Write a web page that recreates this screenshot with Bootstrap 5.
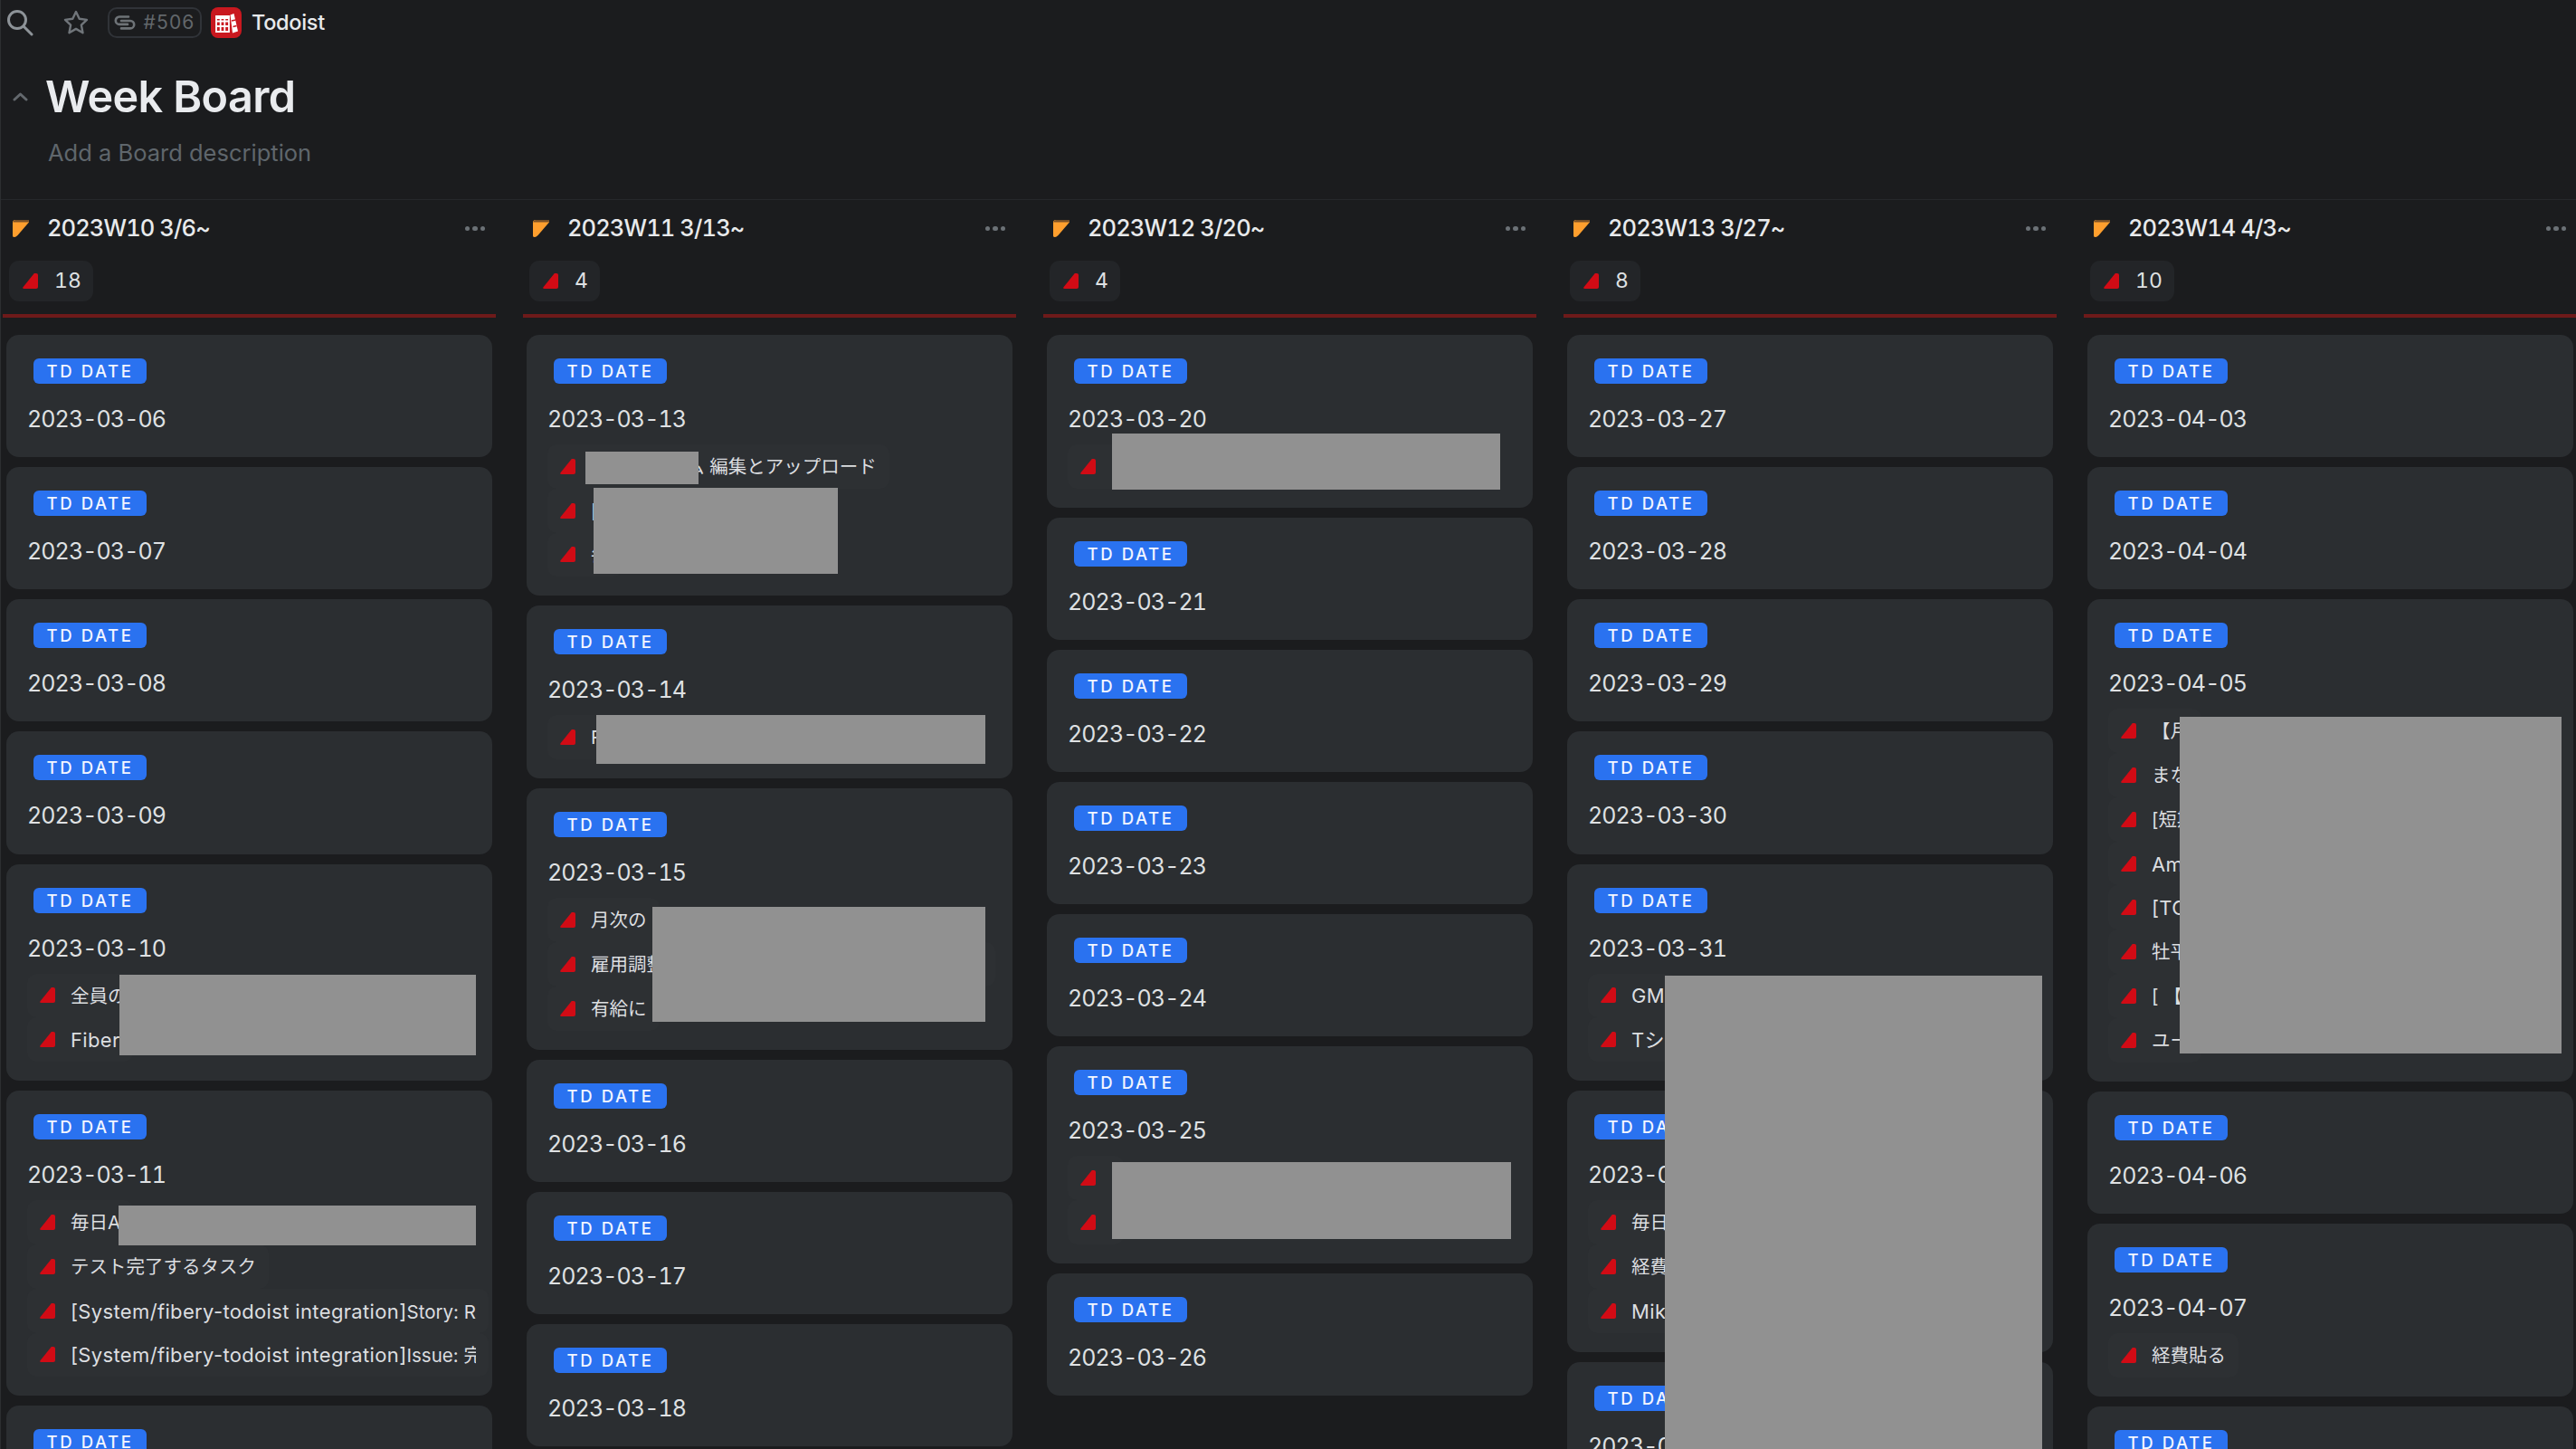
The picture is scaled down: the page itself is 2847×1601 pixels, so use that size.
<!DOCTYPE html>
<html lang="ja">
<head>
<meta charset="utf-8">
<title>Week Board</title>
<link rel="stylesheet" href="https://cdn.jsdelivr.net/npm/bootstrap@5.3.0/dist/css/bootstrap.min.css">
<style>
html,body{height:1601px;overflow:hidden}
body{background:#1b1c1e;color:#e4e6e8;font-family:Inter,"Noto Sans CJK JP",sans-serif}
.wk-page{position:relative;width:2847px;height:1601px;overflow:hidden;border-left:1px solid #2c2e31}
.wk-top{height:50px;padding-left:6px}
.wk-star{margin-left:33px}
.wk-ref{height:34px;width:104px;margin-left:21px;margin-right:10px;border:2px solid #303338;border-radius:10px;color:#62676b;font-size:21px;letter-spacing:1.2px;justify-content:center}
.wk-app{font-size:23.5px;font-weight:500;letter-spacing:-.3px;color:#e8eaec;margin-left:11px}
.wk-head{padding:28px 0 33px 13px;border-bottom:1px solid #26282b}
.wk-h1{font-size:48.5px;line-height:58px;font-weight:600;letter-spacing:-.6px;color:#e9ebee;margin:0 0 0 19px}
.wk-desc{font-size:25.5px;line-height:36px;margin:15px 0 0 39px;color:#5f666c}
.wk-cols{padding-left:2px;gap:30px;font-feature-settings:"tnum"}
.wk-col{flex:0 0 545px;width:545px}
.wk-title{height:34px;margin-top:14px;padding:1px 12px 0 11px;gap:20px;font-size:25.5px;font-weight:500;letter-spacing:-.9px;color:#e8eaec}
.wk-dots{margin-left:auto;gap:3px}
.wk-dots i{display:block;width:5.5px;height:5.5px;border-radius:50%;background:#6b7176}
.wk-count{height:45px;margin:19px 0 0 7px;padding:0 13px 0 15px;gap:18px;border-radius:11px;background:#232528;font-size:23px;color:#dfe1e3}
.wk-line{height:4px;margin-top:14px;background:#6e1a1a}
.wk-stack{margin:19px 4px 0;gap:11px}
.wk-card{border:0;border-radius:14px;background:#2b2e31;color:#dfe1e3;padding:26px 4px 22.15px 23px}
.wk-card.wk-has{padding-bottom:21px}
.wk-tag{display:block;width:125px;height:28px;margin-left:7px;padding:0;border-radius:6px;background:#2a72f0;color:#f3f6ff;font-size:18.5px;line-height:28px;font-weight:500;letter-spacing:2.6px;text-align:center}
.wk-date{font-size:25px;letter-spacing:-.9px;line-height:40px;margin-top:19px;color:#dfe1e3}
.wk-rows{margin:8px 0 0}
.wk-row{height:48.8px;max-width:100%;width:fit-content;padding:0 14px;gap:17px;border-radius:10px;background:#2d3033;font-size:20.5px;white-space:nowrap;color:#dcdee0;font-feature-settings:normal}
.wk-row svg{flex:none}
.wk-txt{overflow:hidden;display:block;white-space:pre;padding-top:2px}
.wk-lat{font-size:22px;letter-spacing:.35px}
.wk-tail{font-size:20.5px;letter-spacing:0}
.wk-gap{display:inline-block;width:20px}
.wk-gap1{width:105px}
.wk-gap2{width:330px}
.wk-rd{position:absolute;background:#919191}
.wk-r1{left:131px;top:1077px;width:394px;height:89px}
.wk-r2{left:130px;top:1332px;width:395px;height:44px}
.wk-r3{left:646px;top:499px;width:125px;height:36px}
.wk-r4{left:655px;top:539px;width:270px;height:95px}
.wk-r5{left:658px;top:790px;width:430px;height:54px}
.wk-r6{left:720px;top:1002px;width:368px;height:127px}
.wk-r7{left:1228px;top:479px;width:429px;height:62px}
.wk-r8{left:1228px;top:1284px;width:441px;height:85px}
.wk-r9{left:1839px;top:1078px;width:417px;height:523px}
.wk-r10{left:2408px;top:792px;width:422px;height:372px}
</style>
</head>
<body>
<svg width="0" height="0" class="position-absolute">
<defs>
<symbol id="wk-red" viewBox="0 0 17 17"><path d="M17 1.800Q17 0 15 0H12.800L0.500 15.200Q-0.500 17 1.500 17H15Q17 17 17 15Z" fill="#d10b15"/></symbol>
<symbol id="wk-orange" viewBox="0 0 18 19"><path d="M3 0H18V2.500L5.500 17Q3.500 19 2 19Q0 19 0 17.500V3Q0 0 3 0Z" fill="#ff9f2e"/><path d="M3 0H18V2.500H0.300Q0.800 0 3 0Z" fill="#7d5226"/></symbol>
</defs>
</svg>
<div class="wk-page">
  <div class="wk-top d-flex align-items-center">
    <svg width="30" height="30" viewBox="0 0 30 30" fill="none" stroke="#8d9398" stroke-width="3"><circle cx="12" cy="12" r="9.500"/><path d="M19 19l9 9" stroke-linecap="round"/></svg>
    <svg class="wk-star" width="28" height="28" viewBox="0 0 28 28" fill="none" stroke="#70757a" stroke-width="2.400" stroke-linejoin="round"><path d="M14 2l3.700 7.800 8.300 1.100-6.100 5.800 1.600 8.500L14 20.900l-7.500 4.300 1.600-8.500L2 10.900l8.300-1.100z"/></svg>
    <div class="wk-ref d-flex align-items-center gap-2">
      <svg width="24" height="16" viewBox="0 0 24 16" fill="none" stroke="#6e7377" stroke-width="2.600" stroke-linecap="round"><path d="M16 1.500H6a4.200 4.200 0 0 0 0 8.400h9"/><path d="M8 6h10a4.200 4.200 0 0 1 0 8.400H8"/></svg>
      <span>#506</span>
    </div>
    <svg width="34" height="34" viewBox="0 0 34 34"><rect width="34" height="34" rx="8" fill="#c9181f"/><g fill="none" stroke="#fff" stroke-width="1.800"><path d="M6 10h14v17H6z"/><path d="M10.700 10v17M15.300 10v17M6 15.500h14M6 21h14"/></g><path d="M6 10h14v3H6z" fill="#fff"/><path d="M21.500 8.500l4-1.500 4.500 19.500-6 2z" fill="#fff"/><path d="M23 15l4.500-1M24.500 21.500l4-1" stroke="#c9181f" stroke-width="1.600"/></svg>
    <span class="wk-app">Todoist</span>
  </div>
  <div class="wk-head">
    <div class="d-flex align-items-center">
      <svg width="17" height="10" viewBox="0 0 17 10" fill="none" stroke="#63686d" stroke-width="3" stroke-linecap="round" stroke-linejoin="round"><path d="M2 8l6.500-6 6.500 6"/></svg>
      <h1 class="wk-h1">Week Board</h1>
    </div>
    <p class="wk-desc">Add a Board description</p>
  </div>
  <div class="wk-cols d-flex">

    <section class="wk-col">
      <div class="wk-title d-flex align-items-center"><svg width="18" height="19"><use href="#wk-orange"/></svg><span>2023W10 3/6~</span><span class="wk-dots d-flex"><i></i><i></i><i></i></span></div>
      <div class="wk-count d-inline-flex align-items-center"><svg width="17" height="17"><use href="#wk-red"/></svg><span>18</span></div>
      <div class="wk-line"></div>
      <div class="wk-stack d-flex flex-column">
        <div class="card wk-card"><span class="badge wk-tag">TD DATE</span><div class="wk-date">2023-03-06</div></div>
        <div class="card wk-card"><span class="badge wk-tag">TD DATE</span><div class="wk-date">2023-03-07</div></div>
        <div class="card wk-card"><span class="badge wk-tag">TD DATE</span><div class="wk-date">2023-03-08</div></div>
        <div class="card wk-card"><span class="badge wk-tag">TD DATE</span><div class="wk-date">2023-03-09</div></div>
        <div class="card wk-card wk-has"><span class="badge wk-tag">TD DATE</span><div class="wk-date">2023-03-10</div>
          <ul class="wk-rows list-unstyled">
            <li class="wk-row d-flex align-items-center"><svg width="17" height="17"><use href="#wk-red"/></svg><span class="wk-txt">全員の</span></li>
            <li class="wk-row d-flex align-items-center"><svg width="17" height="17"><use href="#wk-red"/></svg><span class="wk-txt wk-lat">Fiber</span></li>
          </ul>
        </div>
        <div class="card wk-card wk-has"><span class="badge wk-tag">TD DATE</span><div class="wk-date">2023-03-11</div>
          <ul class="wk-rows list-unstyled">
            <li class="wk-row d-flex align-items-center"><svg width="17" height="17"><use href="#wk-red"/></svg><span class="wk-txt">毎日A</span></li>
            <li class="wk-row d-flex align-items-center"><svg width="17" height="17"><use href="#wk-red"/></svg><span class="wk-txt">テスト完了するタスク</span></li>
            <li class="wk-row d-flex align-items-center"><svg width="17" height="17"><use href="#wk-red"/></svg><span class="wk-txt wk-lat">[System/fibery-todoist integration]<span class="wk-tail">Story: R</span></span></li>
            <li class="wk-row d-flex align-items-center"><svg width="17" height="17"><use href="#wk-red"/></svg><span class="wk-txt wk-lat">[System/fibery-todoist integration]<span class="wk-tail">Issue: 完</span></span></li>
          </ul>
        </div>
        <div class="card wk-card"><span class="badge wk-tag">TD DATE</span><div class="wk-date">2023-03-12</div></div>
      </div>
    </section>

    <section class="wk-col">
      <div class="wk-title d-flex align-items-center"><svg width="18" height="19"><use href="#wk-orange"/></svg><span>2023W11 3/13~</span><span class="wk-dots d-flex"><i></i><i></i><i></i></span></div>
      <div class="wk-count d-inline-flex align-items-center"><svg width="17" height="17"><use href="#wk-red"/></svg><span>4</span></div>
      <div class="wk-line"></div>
      <div class="wk-stack d-flex flex-column">
        <div class="card wk-card wk-has"><span class="badge wk-tag">TD DATE</span><div class="wk-date">2023-03-13</div>
          <ul class="wk-rows list-unstyled">
            <li class="wk-row d-flex align-items-center"><svg width="17" height="17"><use href="#wk-red"/></svg><span class="wk-txt"><span class="wk-gap wk-gap1"></span>ム 編集とアップロード</span></li>
            <li class="wk-row d-flex align-items-center"><svg width="17" height="17"><use href="#wk-red"/></svg><span class="wk-txt">[</span></li>
            <li class="wk-row d-flex align-items-center"><svg width="17" height="17"><use href="#wk-red"/></svg><span class="wk-txt">毎</span></li>
          </ul>
        </div>
        <div class="card wk-card wk-has"><span class="badge wk-tag">TD DATE</span><div class="wk-date">2023-03-14</div>
          <ul class="wk-rows list-unstyled">
            <li class="wk-row d-flex align-items-center"><svg width="17" height="17"><use href="#wk-red"/></svg><span class="wk-txt">F</span></li>
          </ul>
        </div>
        <div class="card wk-card wk-has"><span class="badge wk-tag">TD DATE</span><div class="wk-date">2023-03-15</div>
          <ul class="wk-rows list-unstyled">
            <li class="wk-row d-flex align-items-center"><svg width="17" height="17"><use href="#wk-red"/></svg><span class="wk-txt">月次の</span></li>
            <li class="wk-row d-flex align-items-center"><svg width="17" height="17"><use href="#wk-red"/></svg><span class="wk-txt">雇用調整<span class="wk-gap wk-gap2"></span>回</span></li>
            <li class="wk-row d-flex align-items-center"><svg width="17" height="17"><use href="#wk-red"/></svg><span class="wk-txt">有給に</span></li>
          </ul>
        </div>
        <div class="card wk-card"><span class="badge wk-tag">TD DATE</span><div class="wk-date">2023-03-16</div></div>
        <div class="card wk-card"><span class="badge wk-tag">TD DATE</span><div class="wk-date">2023-03-17</div></div>
        <div class="card wk-card"><span class="badge wk-tag">TD DATE</span><div class="wk-date">2023-03-18</div></div>
      </div>
    </section>

    <section class="wk-col">
      <div class="wk-title d-flex align-items-center"><svg width="18" height="19"><use href="#wk-orange"/></svg><span>2023W12 3/20~</span><span class="wk-dots d-flex"><i></i><i></i><i></i></span></div>
      <div class="wk-count d-inline-flex align-items-center"><svg width="17" height="17"><use href="#wk-red"/></svg><span>4</span></div>
      <div class="wk-line"></div>
      <div class="wk-stack d-flex flex-column">
        <div class="card wk-card wk-has"><span class="badge wk-tag">TD DATE</span><div class="wk-date">2023-03-20</div>
          <ul class="wk-rows list-unstyled">
            <li class="wk-row d-flex align-items-center"><svg width="17" height="17"><use href="#wk-red"/></svg><span class="wk-txt"></span></li>
          </ul>
        </div>
        <div class="card wk-card"><span class="badge wk-tag">TD DATE</span><div class="wk-date">2023-03-21</div></div>
        <div class="card wk-card"><span class="badge wk-tag">TD DATE</span><div class="wk-date">2023-03-22</div></div>
        <div class="card wk-card"><span class="badge wk-tag">TD DATE</span><div class="wk-date">2023-03-23</div></div>
        <div class="card wk-card"><span class="badge wk-tag">TD DATE</span><div class="wk-date">2023-03-24</div></div>
        <div class="card wk-card wk-has"><span class="badge wk-tag">TD DATE</span><div class="wk-date">2023-03-25</div>
          <ul class="wk-rows list-unstyled">
            <li class="wk-row d-flex align-items-center"><svg width="17" height="17"><use href="#wk-red"/></svg><span class="wk-txt"></span></li>
            <li class="wk-row d-flex align-items-center"><svg width="17" height="17"><use href="#wk-red"/></svg><span class="wk-txt"></span></li>
          </ul>
        </div>
        <div class="card wk-card"><span class="badge wk-tag">TD DATE</span><div class="wk-date">2023-03-26</div></div>
      </div>
    </section>

    <section class="wk-col">
      <div class="wk-title d-flex align-items-center"><svg width="18" height="19"><use href="#wk-orange"/></svg><span>2023W13 3/27~</span><span class="wk-dots d-flex"><i></i><i></i><i></i></span></div>
      <div class="wk-count d-inline-flex align-items-center"><svg width="17" height="17"><use href="#wk-red"/></svg><span>8</span></div>
      <div class="wk-line"></div>
      <div class="wk-stack d-flex flex-column">
        <div class="card wk-card"><span class="badge wk-tag">TD DATE</span><div class="wk-date">2023-03-27</div></div>
        <div class="card wk-card"><span class="badge wk-tag">TD DATE</span><div class="wk-date">2023-03-28</div></div>
        <div class="card wk-card"><span class="badge wk-tag">TD DATE</span><div class="wk-date">2023-03-29</div></div>
        <div class="card wk-card"><span class="badge wk-tag">TD DATE</span><div class="wk-date">2023-03-30</div></div>
        <div class="card wk-card wk-has"><span class="badge wk-tag">TD DATE</span><div class="wk-date">2023-03-31</div>
          <ul class="wk-rows list-unstyled">
            <li class="wk-row d-flex align-items-center"><svg width="17" height="17"><use href="#wk-red"/></svg><span class="wk-txt wk-lat">GM</span></li>
            <li class="wk-row d-flex align-items-center"><svg width="17" height="17"><use href="#wk-red"/></svg><span class="wk-txt wk-lat">Tシ</span></li>
          </ul>
        </div>
        <div class="card wk-card wk-has"><span class="badge wk-tag">TD DATE</span><div class="wk-date">2023-04-01</div>
          <ul class="wk-rows list-unstyled">
            <li class="wk-row d-flex align-items-center"><svg width="17" height="17"><use href="#wk-red"/></svg><span class="wk-txt">毎日</span></li>
            <li class="wk-row d-flex align-items-center"><svg width="17" height="17"><use href="#wk-red"/></svg><span class="wk-txt">経費</span></li>
            <li class="wk-row d-flex align-items-center"><svg width="17" height="17"><use href="#wk-red"/></svg><span class="wk-txt wk-lat">Mik</span></li>
          </ul>
        </div>
        <div class="card wk-card"><span class="badge wk-tag">TD DATE</span><div class="wk-date">2023-04-02</div></div>
      </div>
    </section>

    <section class="wk-col">
      <div class="wk-title d-flex align-items-center"><svg width="18" height="19"><use href="#wk-orange"/></svg><span>2023W14 4/3~</span><span class="wk-dots d-flex"><i></i><i></i><i></i></span></div>
      <div class="wk-count d-inline-flex align-items-center"><svg width="17" height="17"><use href="#wk-red"/></svg><span>10</span></div>
      <div class="wk-line"></div>
      <div class="wk-stack d-flex flex-column">
        <div class="card wk-card"><span class="badge wk-tag">TD DATE</span><div class="wk-date">2023-04-03</div></div>
        <div class="card wk-card"><span class="badge wk-tag">TD DATE</span><div class="wk-date">2023-04-04</div></div>
        <div class="card wk-card wk-has"><span class="badge wk-tag">TD DATE</span><div class="wk-date">2023-04-05</div>
          <ul class="wk-rows list-unstyled">
            <li class="wk-row d-flex align-items-center"><svg width="17" height="17"><use href="#wk-red"/></svg><span class="wk-txt">【月</span></li>
            <li class="wk-row d-flex align-items-center"><svg width="17" height="17"><use href="#wk-red"/></svg><span class="wk-txt">まな</span></li>
            <li class="wk-row d-flex align-items-center"><svg width="17" height="17"><use href="#wk-red"/></svg><span class="wk-txt">[短期</span></li>
            <li class="wk-row d-flex align-items-center"><svg width="17" height="17"><use href="#wk-red"/></svg><span class="wk-txt wk-lat">Am</span></li>
            <li class="wk-row d-flex align-items-center"><svg width="17" height="17"><use href="#wk-red"/></svg><span class="wk-txt wk-lat">[TC</span></li>
            <li class="wk-row d-flex align-items-center"><svg width="17" height="17"><use href="#wk-red"/></svg><span class="wk-txt">牡平</span></li>
            <li class="wk-row d-flex align-items-center"><svg width="17" height="17"><use href="#wk-red"/></svg><span class="wk-txt">[ 【T</span></li>
            <li class="wk-row d-flex align-items-center"><svg width="17" height="17"><use href="#wk-red"/></svg><span class="wk-txt">ユー</span></li>
          </ul>
        </div>
        <div class="card wk-card"><span class="badge wk-tag">TD DATE</span><div class="wk-date">2023-04-06</div></div>
        <div class="card wk-card wk-has"><span class="badge wk-tag">TD DATE</span><div class="wk-date">2023-04-07</div>
          <ul class="wk-rows list-unstyled">
            <li class="wk-row d-flex align-items-center"><svg width="17" height="17"><use href="#wk-red"/></svg><span class="wk-txt">経費貼る</span></li>
          </ul>
        </div>
        <div class="card wk-card"><span class="badge wk-tag">TD DATE</span><div class="wk-date">2023-04-08</div></div>
      </div>
    </section>
  </div>
  <div class="wk-rd wk-r1"></div><div class="wk-rd wk-r2"></div><div class="wk-rd wk-r3"></div><div class="wk-rd wk-r4"></div><div class="wk-rd wk-r5"></div>
  <div class="wk-rd wk-r6"></div><div class="wk-rd wk-r7"></div><div class="wk-rd wk-r8"></div><div class="wk-rd wk-r9"></div><div class="wk-rd wk-r10"></div>
</div>
<script src="https://cdn.jsdelivr.net/npm/bootstrap@5.3.0/dist/js/bootstrap.bundle.min.js"></script>
</body>
</html>
